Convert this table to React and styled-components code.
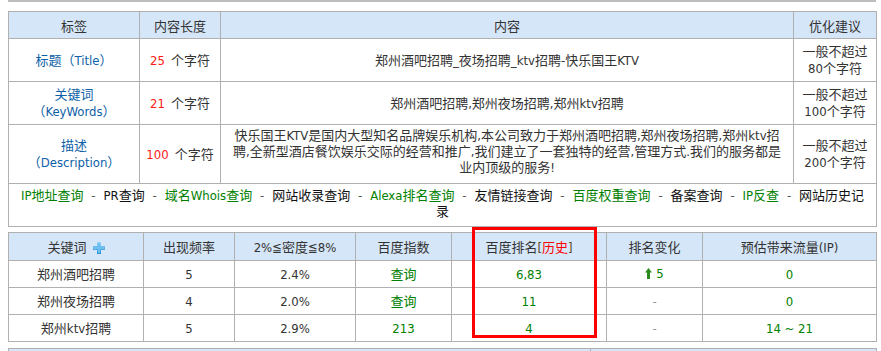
import React from "react";
import styled, { createGlobalStyle } from "styled-components";

const GlobalStyle = createGlobalStyle`
  html, body {
    margin: 0;
    padding: 0;
    background: #fff;
  }
  body {
    font-family: "DejaVu Sans Condensed", "Liberation Sans", "Noto Sans CJK SC", sans-serif;
    font-size: 13px;
    color: #333;
  }
`;

const Page = styled.div`
  padding-left: 8px;
  width: 868px;
`;

const TopRule = styled.div`
  height: 0;
  border-top: 2px solid #bdbdbd;
  margin-bottom: 9px;
`;

const Grid = styled.table`
  width: 868px;
  border-collapse: collapse;
  table-layout: fixed;
  border: 1px solid #b0b0b0;
  margin-bottom: ${p => p.$gap || 0}px;
`;

const Head = styled.th`
  background: #d5e6f8;
  font-weight: normal;
  color: #333;
  border: 1px solid #b0b0b0;
  height: ${p => p.$h || 26}px;
  padding: 0;
  text-align: center;
  white-space: nowrap;
`;

const Cell = styled.td`
  border: 1px solid #b0b0b0;
  height: ${p => p.$h || 26}px;
  padding: ${p => p.$pad || "0"};
  text-align: center;
  vertical-align: ${p => p.$top ? "top" : "middle"};
  line-height: ${p => p.$lh || 17}px;
  color: ${p => p.$color || "#333"};
  white-space: nowrap;
`;

const TagName = styled.span`
  color: #0d5fa8;
`;

const Count = styled.span`
  color: #ff1a1a;
  margin-right: 6px;
`;

const Good = styled.span`
  color: #008000;
`;

const Plain = styled.span`
  color: #111;
`;

const Sep = styled.span`
  display: inline-block;
  width: 20px;
  text-align: center;
  color: #555;
`;

const Muted = styled.span`
  color: #999;
`;

const Red = styled.span`
  color: #ff0000;
`;

const Bracket = styled.span`
  color: #5a4a2a;
`;

const RankWrap = styled.div`
  position: relative;
  margin-bottom: 6px;
`;

const RedBox = styled.div`
  position: absolute;
  left: 464px;
  top: -5px;
  width: 125px;
  height: 111px;
  box-sizing: border-box;
  border: 3px solid #f00;
  pointer-events: none;
`;

const IconSlot = styled.span`
  display: inline-flex;
  vertical-align: -2px;
  margin-left: 6px;
`;

const Trend = styled.span`
  display: inline-flex;
  align-items: center;
  gap: 4px;
  color: #008000;
`;

const PlusIcon = () => (
  <svg width="12" height="12" viewBox="0 0 12 12">
    <defs>
      <linearGradient id="pg" x1="0" y1="0" x2="0" y2="1">
        <stop offset="0" stopColor="#9ad6f8" />
        <stop offset="1" stopColor="#2a8fd8" />
      </linearGradient>
    </defs>
    <path d="M4 0h4v4h4v4H8v4H4V8H0V4h4z" fill="url(#pg)" />
    <path d="M5 1h2v4h4v2H7v4H5V7H1V5h4z" fill="#6cc0f0" />
  </svg>
);

const UpArrow = () => (
  <svg width="7" height="11" viewBox="0 0 7 11">
    <path d="M3.5 0L7 4.5H5V11H2V4.5H0z" fill="#2c8a1c" />
  </svg>
);

const meta = [
  { label: "标题", en: "Title", len: 25, text: "郑州酒吧招聘_夜场招聘_ktv招聘-快乐国王KTV", limit: "80", h: 42, inline: true },
  { label: "关键词", en: "KeyWords", len: 21, text: "郑州酒吧招聘,郑州夜场招聘,郑州ktv招聘", limit: "100", h: 42 },
];

const links = [
  ["IP地址查询", true], ["PR查询", false], ["域名Whois查询", true], ["网站收录查询", false],
  ["Alexa排名查询", true], ["友情链接查询", false], ["百度权重查询", true], ["备案查询", false],
  ["IP反查", true], ["网站历史记", false],
];

const keywords = [
  { word: "郑州酒吧招聘", freq: 5, density: "2.4%", index: "查询", rank: "6,83", change: 5, flow: "0" },
  { word: "郑州夜场招聘", freq: 4, density: "2.0%", index: "查询", rank: "11", change: null, flow: "0" },
  { word: "郑州ktv招聘", freq: 5, density: "2.9%", index: "213", rank: "4", change: null, flow: "14 ~ 21" },
];

export default function App() {
  return (
    <Page>
      <GlobalStyle />
      <TopRule />
      <Grid $gap={5}>
        <colgroup>
          <col style={{ width: 131 }} />
          <col style={{ width: 81 }} />
          <col style={{ width: 573 }} />
          <col style={{ width: 83 }} />
        </colgroup>
        <thead>
          <tr>
            <Head>标签</Head>
            <Head>内容长度</Head>
            <Head>内容</Head>
            <Head>优化建议</Head>
          </tr>
        </thead>
        <tbody>
          {meta.map(m => (
            <tr key={m.label}>
              <Cell $h={m.h}>
                {m.inline ? (
                  <TagName>{m.label}（{m.en}）</TagName>
                ) : (
                  <TagName>{m.label}<br />（{m.en}）</TagName>
                )}
              </Cell>
              <Cell $h={m.h}><Count>{m.len}</Count>个字符</Cell>
              <Cell $h={m.h}>{m.text}</Cell>
              <Cell $h={m.h}>一般不超过<br />{m.limit}个字符</Cell>
            </tr>
          ))}
          <tr>
            <Cell $h={55}><TagName>描述<br />（Description）</TagName></Cell>
            <Cell $h={55}><Count>100</Count>个字符</Cell>
            <Cell $h={55} $top $pad="3px 0 0" $lh={16}>
              快乐国王KTV是国内大型知名品牌娱乐机构,本公司致力于郑州酒吧招聘,郑州夜场招聘,郑州ktv招<br />
              聘,全新型酒店餐饮娱乐交际的经营和推广,我们建立了一套独特的经营,管理方式.我们的服务都是<br />
              业内顶级的服务!
            </Cell>
            <Cell $h={55}>一般不超过<br />200个字符</Cell>
          </tr>
          <tr>
            <Cell colSpan={4} $h={38} $top $pad="4px 0 0" $lh={16}>
              {links.map(([t, green], i) => (
                <React.Fragment key={t}>
                  {i > 0 && <Sep>-</Sep>}
                  {green ? <Good>{t}</Good> : <Plain>{t}</Plain>}
                </React.Fragment>
              ))}
              <br />
              <Plain>录</Plain>
            </Cell>
          </tr>
        </tbody>
      </Grid>

      <RankWrap>
        <Grid>
          <colgroup>
            <col style={{ width: 135 }} />
            <col style={{ width: 91 }} />
            <col style={{ width: 121 }} />
            <col style={{ width: 96 }} />
            <col style={{ width: 155 }} />
            <col style={{ width: 96 }} />
            <col style={{ width: 174 }} />
          </colgroup>
          <thead>
            <tr>
              <Head $h={27}>关键词<IconSlot><PlusIcon /></IconSlot></Head>
              <Head $h={27}>出现频率</Head>
              <Head $h={27}>2%≦密度≦8%</Head>
              <Head $h={27}>百度指数</Head>
              <Head $h={27}>百度排名<Bracket>[</Bracket><Red>历史</Red><Bracket>]</Bracket></Head>
              <Head $h={27}>排名变化</Head>
              <Head $h={27}>预估带来流量(IP)</Head>
            </tr>
          </thead>
          <tbody>
            {keywords.map(k => (
              <tr key={k.word}>
                <Cell>{k.word}</Cell>
                <Cell>{k.freq}</Cell>
                <Cell>{k.density}</Cell>
                <Cell $color="#008000">{k.index}</Cell>
                <Cell $color="#008000">{k.rank}</Cell>
                <Cell>
                  {k.change ? <Trend><UpArrow />{k.change}</Trend> : <Muted>-</Muted>}
                </Cell>
                <Cell $color="#008000">{k.flow}</Cell>
              </tr>
            ))}
          </tbody>
        </Grid>
        <RedBox />
      </RankWrap>

      <Grid>
        <colgroup>
          <col style={{ width: 582 }} />
          <col style={{ width: 286 }} />
        </colgroup>
        <thead>
          <tr>
            <Head $h={27}>&nbsp;</Head>
            <Head $h={27}>&nbsp;</Head>
          </tr>
        </thead>
      </Grid>
    </Page>
  );
}
